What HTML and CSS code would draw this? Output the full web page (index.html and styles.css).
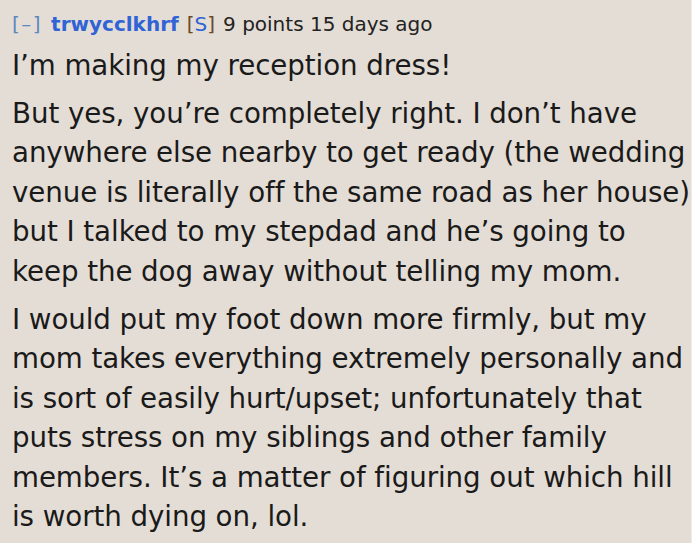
FILE: index.html
```html
<!DOCTYPE html>
<html>
<head>
<meta charset="utf-8">
<link rel="stylesheet" href="styles.css">
</head>
<body>
<div class="comment">
  <div class="tagline">
    <span class="expand">[–]</span>
    <span class="author">trwycclkhrf</span>
    <span class="sub">[<span class="s">S</span>]</span>
    <span class="meta">9 points 15 days ago</span>
  </div>
  <div class="body">
    <p>I’m making my reception dress!</p>
    <p>But yes, you’re completely right. I don’t have<br>anywhere else nearby to get ready (the wedding<br>venue is literally off the same road as her house)<br>but I talked to my stepdad and he’s going to<br>keep the dog away without telling my mom.</p>
    <p>I would put my foot down more firmly, but my<br>mom takes everything extremely personally and<br>is sort of easily hurt/upset; unfortunately that<br>puts stress on my siblings and other family<br>members. It’s a matter of figuring out which hill<br>is worth dying on, lol.</p>
  </div>
</div>
</body>
</html>
```
FILE: styles.css
```css
html, body {
  margin: 0;
  padding: 0;
  background: #ffffff;
}
body {
  font-family: "DejaVu Sans", Verdana, sans-serif;
  color: #1a1a1a;
}
.comment {
  background: #e4ddd5;
  border-right: 1px solid #efece8;
  height: 543px;
  padding: 10.5px 0 0 12px;
  box-sizing: border-box;
  width: 692px;
  overflow: hidden;
}
.tagline {
  font-size: 20px;
  line-height: 26px;
  display: flex;
  gap: 8px;
  align-items: baseline;
}
.expand { color: #5d88bf; letter-spacing: 1.5px; margin-right: 1px; }
.author { color: #2f63d6; font-weight: bold; }
.sub { color: #6a4a2a; }
.s { color: #2f63d6; }
.meta { color: #222; }
.body {
  font-size: 27.7px;
  line-height: 39.5px;
  padding-top: 9px;
  white-space: nowrap;
  letter-spacing: -0.07px;
}
.body p {
  margin: 0 0 8.5px 0;
}
```
